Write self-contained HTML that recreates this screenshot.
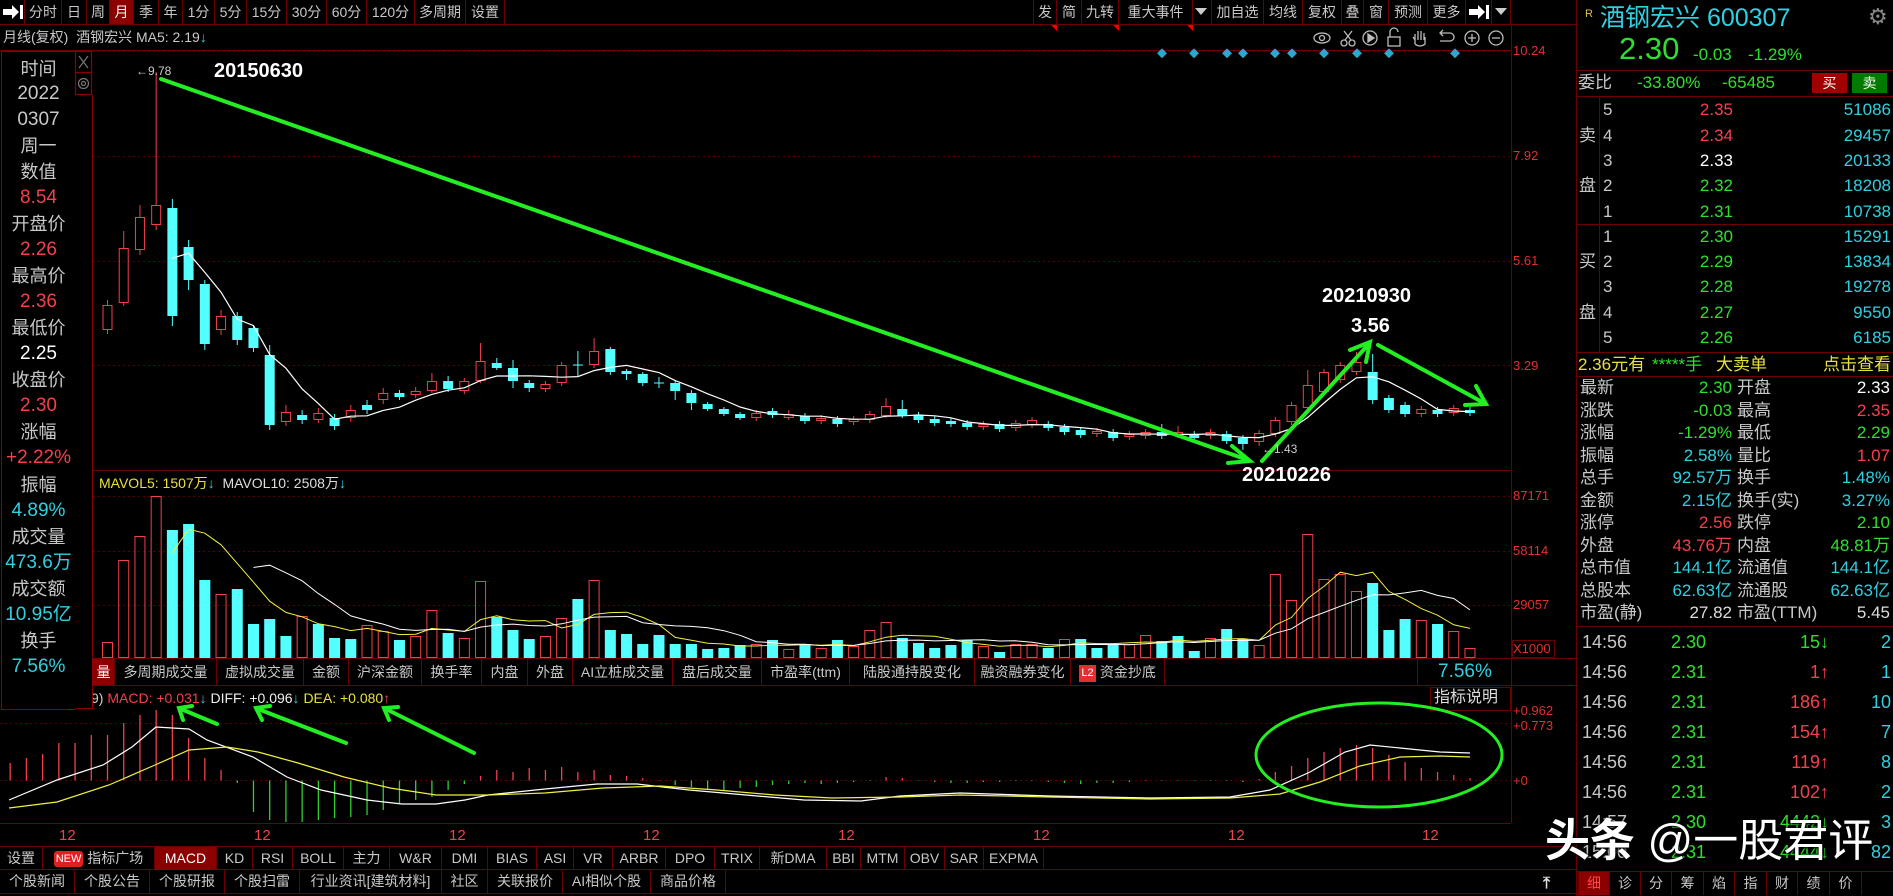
<!DOCTYPE html>
<html><head><meta charset="utf-8">
<style>
body{margin:0;background:#000;width:1893px;height:896px;overflow:hidden;position:relative;font-family:"Liberation Sans","Noto Sans CJK SC",sans-serif;color:#c8c8c8}
.t{position:absolute;white-space:nowrap;line-height:1}
.c{position:absolute;top:0;height:24px;line-height:24px;text-align:center;font-size:14px;border-right:1px solid #6a0000;box-sizing:border-box;color:#c8c8c8}
.lp{position:absolute;left:2px;width:73px;text-align:center;height:22px;line-height:22px;font-size:18px;color:#c8c8c8}
.r{color:#f5404c}.cy{color:#2fd0e0}.g{color:#2ee02e}.y{color:#e8e040}.w{color:#fff}
.rr{position:absolute;height:22px;line-height:22px;font-size:17px;white-space:nowrap}
.vt{position:absolute;top:659px;height:26px;line-height:26px;font-size:14px;text-align:center;border-right:1px solid #6a0000;box-sizing:border-box}
.bt{position:absolute;height:23px;line-height:23px;font-size:14px;text-align:center;border-right:1px solid #6a0000;box-sizing:border-box;color:#c8c8c8}
.ax{position:absolute;left:1513px;font-size:13px;color:#e03030;height:16px;line-height:16px}
</style></head><body>
<svg id="g" width="1893" height="896" style="position:absolute;left:0;top:0">
<g stroke="#6a0000" stroke-width="1" fill="none">
<line x1="0" y1="24.5" x2="1576" y2="24.5"/>
<line x1="0" y1="50.5" x2="1511" y2="50.5"/>
<line x1="1511.5" y1="24" x2="1511.5" y2="823"/>
<line x1="1576.5" y1="0" x2="1576.5" y2="896"/>
<line x1="93" y1="470.5" x2="1511" y2="470.5"/>
<line x1="93" y1="658.5" x2="1576" y2="658.5"/>
<line x1="93" y1="685.5" x2="1576" y2="685.5"/>
<line x1="0" y1="823.5" x2="1511" y2="823.5"/>
<line x1="0" y1="846.5" x2="1576" y2="846.5"/>
<line x1="0" y1="869.5" x2="1576" y2="869.5"/>
<line x1="0" y1="893.5" x2="1576" y2="893.5"/>
<line x1="1576" y1="70.5" x2="1893" y2="70.5"/>
<line x1="1576" y1="96.5" x2="1893" y2="96.5"/>
<line x1="1576" y1="224.5" x2="1893" y2="224.5"/>
<line x1="1576" y1="352.5" x2="1893" y2="352.5"/>
<line x1="1576" y1="376.5" x2="1893" y2="376.5"/>
<line x1="1576" y1="626.5" x2="1893" y2="626.5"/>
<line x1="1576" y1="871.5" x2="1893" y2="871.5"/>
<line x1="1599.5" y1="96" x2="1599.5" y2="352"/>
<line x1="1417.5" y1="658" x2="1417.5" y2="685"/>
<rect x="1512.5" y="640.5" width="42" height="17"/>
<rect x="1430.5" y="687.5" width="80" height="23"/>
</g>
<g stroke="#5a0000" stroke-dasharray="2,3" stroke-width="1">
<line x1="93" y1="51.5" x2="1511" y2="51.5"/>
<line x1="93" y1="156.5" x2="1511" y2="156.5"/>
<line x1="93" y1="261.5" x2="1511" y2="261.5"/>
<line x1="93" y1="365.5" x2="1511" y2="365.5"/>
<line x1="93" y1="496.5" x2="1511" y2="496.5"/>
<line x1="93" y1="551.5" x2="1511" y2="551.5"/>
<line x1="93" y1="605.5" x2="1511" y2="605.5"/>
<line x1="0" y1="723.5" x2="1511" y2="723.5"/>
<line x1="0" y1="780.5" x2="1511" y2="780.5"/>
</g>
<g id="dyn"></g>
<g id="ann" stroke="#22ee22" stroke-width="4" fill="none" stroke-linecap="round">
<line x1="161" y1="79" x2="1248" y2="460"/>
<polyline points="1232,446 1250,461 1228,463"/>
<line x1="1262" y1="461" x2="1368" y2="345"/>
<polyline points="1350,350 1370,342 1366,362"/>
<line x1="1378" y1="345" x2="1484" y2="403"/>
<polyline points="1465,405 1486,404 1476,386"/>
<line x1="217" y1="724" x2="181" y2="709"/>
<polyline points="183,720 179,708 192,706"/>
<line x1="346" y1="743" x2="258" y2="709"/>
<polyline points="262,720 256,708 270,706"/>
<line x1="474" y1="753" x2="386" y2="709"/>
<polyline points="389,720 384,708 398,707"/>
<ellipse cx="1379" cy="755" rx="123" ry="52" stroke-width="3"/>
</g>
<g fill="#2aa8d0">
<rect x="1158" y="50" width="7" height="7" transform="rotate(45 1162 54)"/>
<rect x="1190" y="50" width="7" height="7" transform="rotate(45 1194 54)"/>
<rect x="1223" y="50" width="7" height="7" transform="rotate(45 1227 54)"/>
<rect x="1239" y="50" width="7" height="7" transform="rotate(45 1243 54)"/>
<rect x="1271" y="50" width="7" height="7" transform="rotate(45 1275 54)"/>
<rect x="1288" y="50" width="7" height="7" transform="rotate(45 1292 54)"/>
<rect x="1320" y="50" width="7" height="7" transform="rotate(45 1324 54)"/>
<rect x="1353" y="50" width="7" height="7" transform="rotate(45 1357 54)"/>
<rect x="1385" y="50" width="7" height="7" transform="rotate(45 1389 54)"/>
<rect x="1451" y="50" width="7" height="7" transform="rotate(45 1455 54)"/>
</g>
<g stroke="#bbb" stroke-width="1.3" fill="none">
<ellipse cx="1322" cy="38" rx="8" ry="5"/><circle cx="1322" cy="38" r="2.5"/>
<circle cx="1344" cy="43" r="3"/><circle cx="1352" cy="43" r="3"/><line x1="1345" y1="40" x2="1352" y2="31"/><line x1="1351" y1="40" x2="1344" y2="31"/>
<circle cx="1370" cy="38" r="7"/><polygon points="1368,34 1374,38 1368,42" fill="#bbb"/>
<rect x="1388" y="37" width="12" height="9"/><path d="M1390 37 V32 a4 4 0 0 1 8 0"/>
<path d="M1415 44 V34 M1418 40 V31 M1421 40 V31 M1424 40 V33 M1424 38 V34 M1415 40 L1413 37 M1415 44 Q1420 48 1425 44 V37"/>
<path d="M1440 33 H1450 a4 4 0 0 1 0 8 H1440 M1443 30 L1440 33 L1443 36"/>
<circle cx="1472" cy="38" r="7"/><path d="M1468 38 H1476 M1472 34 V42"/>
<circle cx="1496" cy="38" r="7"/><path d="M1492 38 H1500"/>
</g>
<g fill="#fff">
<polygon points="3,9 12,9 12,5 19,12 12,19 12,15 3,15"/><rect x="20" y="5" width="3" height="14"/>
<polygon points="1469,9 1478,9 1478,5 1485,12 1478,19 1478,15 1469,15"/><rect x="1486" y="5" width="3" height="14"/>
<polygon points="1195,8 1207,8 1201,15" fill="#ccc"/>
<polygon points="1495,8 1507,8 1501,15" fill="#ccc"/>
</g>
<g fill="#e00">
<polygon points="1051,25 1057,25 1057,31"/><polygon points="1113,25 1119,25 1119,31"/><polygon points="1187,25 1193,25 1193,31"/>
</g>
</svg>

<div class="c" style="left:0;width:25px"></div>
<div class="c" style="left:25px;width:37px">分时</div>
<div class="c" style="left:62px;width:25px">日</div>
<div class="c" style="left:87px;width:23px">周</div>
<div class="c" style="left:110px;width:24px;background:#8b0000;color:#fff">月</div>
<div class="c" style="left:134px;width:25px">季</div>
<div class="c" style="left:159px;width:24px">年</div>
<div class="c" style="left:183px;width:32px">1分</div>
<div class="c" style="left:215px;width:32px">5分</div>
<div class="c" style="left:247px;width:40px">15分</div>
<div class="c" style="left:287px;width:40px">30分</div>
<div class="c" style="left:327px;width:40px">60分</div>
<div class="c" style="left:367px;width:48px">120分</div>
<div class="c" style="left:415px;width:51px">多周期</div>
<div class="c" style="left:466px;width:39px">设置</div>
<div class="c" style="left:1033px;width:24px;border-left:1px solid #6a0000">发</div>
<div class="c" style="left:1057px;width:25px">简</div>
<div class="c" style="left:1082px;width:37px">九转</div>
<div class="c" style="left:1119px;width:74px">重大事件</div>
<div class="c" style="left:1193px;width:19px"></div>
<div class="c" style="left:1212px;width:52px">加自选</div>
<div class="c" style="left:1264px;width:39px">均线</div>
<div class="c" style="left:1303px;width:39px">复权</div>
<div class="c" style="left:1342px;width:22px">叠</div>
<div class="c" style="left:1364px;width:25px">窗</div>
<div class="c" style="left:1389px;width:39px">预测</div>
<div class="c" style="left:1428px;width:38px">更多</div>
<div class="c" style="left:1466px;width:26px"></div>
<div class="c" style="left:1492px;width:19px"></div>

<div class="t" style="left:3px;top:30px;font-size:14px;color:#c8c8c8">月线(复权)&nbsp; 酒钢宏兴 MA5: 2.19<span class="cy">↓</span></div>

<div class="ax" style="top:43px">10.24</div>
<div class="ax" style="top:148px">7.92</div>
<div class="ax" style="top:253px">5.61</div>
<div class="ax" style="top:358px">3.29</div>
<div class="ax" style="top:488px">87171</div>
<div class="ax" style="top:543px">58114</div>
<div class="ax" style="top:597px">29057</div>
<div class="ax" style="top:641px">X1000</div>
<div class="ax" style="top:703px">+0.962</div>
<div class="ax" style="top:718px">+0.773</div>
<div class="ax" style="top:773px">+0</div>

<div class="t" style="left:214px;top:61px;font-size:20px;font-weight:bold;color:#fff">20150630</div>
<div class="t" style="left:160px;top:65px;font-size:12px;color:#ccc;transform:translateX(-24px)">←9.78</div>
<div class="t" style="left:1322px;top:286px;font-size:20px;font-weight:bold;color:#fff">20210930</div>
<div class="t" style="left:1351px;top:316px;font-size:20px;font-weight:bold;color:#fff">3.56</div>
<div class="t" style="left:1242px;top:465px;font-size:20px;font-weight:bold;color:#fff">20210226</div>
<div class="t" style="left:1262px;top:443px;font-size:12px;color:#ccc">←1.43</div>

<div class="t" style="left:99px;top:476px;font-size:14px" ><span class="y">MAVOL5: 1507万</span><span class="cy">↓</span>&nbsp; <span style="color:#ddd">MAVOL10: 2508万</span><span class="cy">↓</span></div>

<div class="vt" style="left:93px;width:22px;background:#8b0000;color:#fff">量</div>
<div class="vt" style="left:115px;width:102px">多周期成交量</div>
<div class="vt" style="left:217px;width:87px">虚拟成交量</div>
<div class="vt" style="left:304px;width:45px">金额</div>
<div class="vt" style="left:349px;width:73px">沪深金额</div>
<div class="vt" style="left:422px;width:60px">换手率</div>
<div class="vt" style="left:482px;width:46px">内盘</div>
<div class="vt" style="left:528px;width:45px">外盘</div>
<div class="vt" style="left:573px;width:100px">AI立桩成交量</div>
<div class="vt" style="left:673px;width:89px">盘后成交量</div>
<div class="vt" style="left:762px;width:88px">市盈率(ttm)</div>
<div class="vt" style="left:850px;width:125px">陆股通持股变化</div>
<div class="vt" style="left:975px;width:96px">融资融券变化</div>
<div class="vt" style="left:1071px;width:94px"><span style="display:inline-block;background:#e03030;color:#fff;font-size:11px;width:17px;height:17px;line-height:17px;vertical-align:middle">L2</span> 资金抄底</div>
<div class="t cy" style="left:1438px;top:662px;font-size:19px">7.56%</div>

<div class="t" style="left:91px;top:691px;font-size:14px;color:#ccc">9) <span class="r">MACD: +0.031</span><span class="cy">↓</span> <span style="color:#eee">DIFF: +0.096</span><span class="cy">↓</span> <span class="y">DEA: +0.080</span><span class="r">↑</span></div>
<div class="t" style="left:1434px;top:690px;font-size:16px;color:#ddd">指标说明</div>

<div class="t r" style="left:59px;top:828px;font-size:15px">12</div>
<div class="t r" style="left:254px;top:828px;font-size:15px">12</div>
<div class="t r" style="left:449px;top:828px;font-size:15px">12</div>
<div class="t r" style="left:643px;top:828px;font-size:15px">12</div>
<div class="t r" style="left:838px;top:828px;font-size:15px">12</div>
<div class="t r" style="left:1033px;top:828px;font-size:15px">12</div>
<div class="t r" style="left:1228px;top:828px;font-size:15px">12</div>
<div class="t r" style="left:1422px;top:828px;font-size:15px">12</div>

<div class="bt" style="left:0;top:847px;width:43px">设置</div>
<div class="bt" style="left:43px;top:847px;width:112px"><span style="display:inline-block;background:#e02020;color:#fff;font-size:11px;padding:0 2px;height:16px;line-height:16px;border-radius:3px;vertical-align:middle">NEW</span> 指标广场</div>
<div class="bt" style="left:155px;top:847px;width:62px;background:#8b0000;color:#fff">MACD</div>
<div class="bt" style="left:217px;top:847px;width:36px">KD</div>
<div class="bt" style="left:253px;top:847px;width:40px">RSI</div>
<div class="bt" style="left:293px;top:847px;width:51px">BOLL</div>
<div class="bt" style="left:344px;top:847px;width:46px">主力</div>
<div class="bt" style="left:390px;top:847px;width:52px">W&amp;R</div>
<div class="bt" style="left:442px;top:847px;width:46px">DMI</div>
<div class="bt" style="left:488px;top:847px;width:49px">BIAS</div>
<div class="bt" style="left:537px;top:847px;width:37px">ASI</div>
<div class="bt" style="left:574px;top:847px;width:39px">VR</div>
<div class="bt" style="left:613px;top:847px;width:53px">ARBR</div>
<div class="bt" style="left:666px;top:847px;width:49px">DPO</div>
<div class="bt" style="left:715px;top:847px;width:45px">TRIX</div>
<div class="bt" style="left:760px;top:847px;width:67px">新DMA</div>
<div class="bt" style="left:827px;top:847px;width:34px">BBI</div>
<div class="bt" style="left:861px;top:847px;width:44px">MTM</div>
<div class="bt" style="left:905px;top:847px;width:40px">OBV</div>
<div class="bt" style="left:945px;top:847px;width:39px">SAR</div>
<div class="bt" style="left:984px;top:847px;width:60px">EXPMA</div>
<div class="bt" style="left:0;top:870px;width:75px">个股新闻</div>
<div class="bt" style="left:75px;top:870px;width:75px">个股公告</div>
<div class="bt" style="left:150px;top:870px;width:75px">个股研报</div>
<div class="bt" style="left:225px;top:870px;width:75px">个股扫雷</div>
<div class="bt" style="left:300px;top:870px;width:142px">行业资讯[建筑材料]</div>
<div class="bt" style="left:442px;top:870px;width:46px">社区</div>
<div class="bt" style="left:488px;top:870px;width:75px">关联报价</div>
<div class="bt" style="left:563px;top:870px;width:88px">AI相似个股</div>
<div class="bt" style="left:651px;top:870px;width:75px">商品价格</div>

<div style="position:absolute;left:1px;top:51px;width:73px;height:657px;background:#000;border:1px solid #8b0000"></div>
<div style="position:absolute;left:75px;top:95px;width:17px;height:613px;background:#000;border-right:1px solid #8b0000;border-bottom:1px solid #8b0000"></div>
<div class="lp" style="top:58px">时间</div>
<div class="lp" style="top:83px;font-size:19px">2022</div>
<div class="lp" style="top:109px;font-size:19px">0307</div>
<div class="lp" style="top:135px">周一</div>
<div class="lp" style="top:161px">数值</div>
<div class="lp r" style="top:187px;font-size:19px">8.54</div>
<div class="lp" style="top:213px">开盘价</div>
<div class="lp r" style="top:239px;font-size:19px">2.26</div>
<div class="lp" style="top:265px">最高价</div>
<div class="lp r" style="top:291px;font-size:19px">2.36</div>
<div class="lp" style="top:317px">最低价</div>
<div class="lp w" style="top:343px;font-size:19px">2.25</div>
<div class="lp" style="top:369px">收盘价</div>
<div class="lp r" style="top:395px;font-size:19px">2.30</div>
<div class="lp" style="top:421px">涨幅</div>
<div class="lp r" style="top:447px;font-size:19px">+2.22%</div>
<div class="lp" style="top:474px">振幅</div>
<div class="lp cy" style="top:500px;font-size:19px">4.89%</div>
<div class="lp" style="top:526px">成交量</div>
<div class="lp cy" style="top:552px;font-size:19px">473.6万</div>
<div class="lp" style="top:578px">成交额</div>
<div class="lp cy" style="top:604px;font-size:19px">10.95亿</div>
<div class="lp" style="top:630px">换手</div>
<div class="lp cy" style="top:656px;font-size:19px">7.56%</div>
<svg width="20" height="46" style="position:absolute;left:74px;top:50px"><g stroke="#777" fill="none" stroke-width="1.2"><rect x="1.5" y="1.5" width="16" height="21" stroke="#8b0000"/><rect x="1.5" y="22.5" width="16" height="22" stroke="#8b0000"/><path d="M5 6 L14 18 M14 6 L5 18"/><circle cx="9.5" cy="33.5" r="5"/><circle cx="9.5" cy="33.5" r="2"/></g></svg>

<div class="t" style="left:1585px;top:9px;font-size:11px;color:#d8c040">R</div>
<div class="t cy" style="left:1600px;top:6px;font-size:25px">酒钢宏兴 600307</div>
<div class="t" style="left:1868px;top:6px;font-size:22px;color:#888">⚙</div>
<div class="t g" style="left:1619px;top:33px;font-size:31px">2.30</div>
<div class="t g" style="left:1693px;top:46px;font-size:17px">-0.03</div>
<div class="t g" style="left:1748px;top:46px;font-size:17px">-1.29%</div>
<div class="rr" style="left:1578px;top:72px;color:#c8c8c8">委比</div>
<div class="rr g" style="left:1637px;top:72px">-33.80%</div>
<div class="rr g" style="left:1722px;top:72px">-65485</div>
<div class="rr" style="left:1812px;top:73px;width:35px;height:20px;line-height:20px;background:#a00000;color:#fff;text-align:center;font-size:14px">买</div>
<div class="rr" style="left:1852px;top:73px;width:35px;height:20px;line-height:20px;background:#007a00;color:#fff;text-align:center;font-size:14px">卖</div>

<div class="rr" style="left:1579px;top:125px">卖</div>
<div class="rr" style="left:1579px;top:175px">盘</div>
<div class="rr" style="left:1579px;top:251px">买</div>
<div class="rr" style="left:1579px;top:302px">盘</div>

<div class="rr" style="left:1603px;top:99px">5</div><div class="rr r" style="right:160px;top:99px">2.35</div><div class="rr cy" style="right:2px;top:99px">51086</div>
<div class="rr" style="left:1603px;top:125px">4</div><div class="rr r" style="right:160px;top:125px">2.34</div><div class="rr cy" style="right:2px;top:125px">29457</div>
<div class="rr" style="left:1603px;top:150px">3</div><div class="rr w" style="right:160px;top:150px">2.33</div><div class="rr cy" style="right:2px;top:150px">20133</div>
<div class="rr" style="left:1603px;top:175px">2</div><div class="rr g" style="right:160px;top:175px">2.32</div><div class="rr cy" style="right:2px;top:175px">18208</div>
<div class="rr" style="left:1603px;top:201px">1</div><div class="rr g" style="right:160px;top:201px">2.31</div><div class="rr cy" style="right:2px;top:201px">10738</div>
<div class="rr" style="left:1603px;top:226px">1</div><div class="rr g" style="right:160px;top:226px">2.30</div><div class="rr cy" style="right:2px;top:226px">15291</div>
<div class="rr" style="left:1603px;top:251px">2</div><div class="rr g" style="right:160px;top:251px">2.29</div><div class="rr cy" style="right:2px;top:251px">13834</div>
<div class="rr" style="left:1603px;top:276px">3</div><div class="rr g" style="right:160px;top:276px">2.28</div><div class="rr cy" style="right:2px;top:276px">19278</div>
<div class="rr" style="left:1603px;top:302px">4</div><div class="rr g" style="right:160px;top:302px">2.27</div><div class="rr cy" style="right:2px;top:302px">9550</div>
<div class="rr" style="left:1603px;top:327px">5</div><div class="rr g" style="right:160px;top:327px">2.26</div><div class="rr cy" style="right:2px;top:327px">6185</div>

<div class="rr y" style="left:1578px;top:354px">2.36元有</div>
<div class="rr g" style="left:1652px;top:354px">*****手</div>
<div class="rr y" style="left:1716px;top:354px">大卖单</div>
<div class="rr y" style="right:2px;top:354px">点击查看</div>

<div class="rr" style="left:1580px;top:377px">最新</div><div class="rr g" style="right:161px;top:377px">2.30</div><div class="rr" style="left:1737px;top:377px">开盘</div><div class="rr w" style="right:3px;top:377px">2.33</div>
<div class="rr" style="left:1580px;top:400px">涨跌</div><div class="rr g" style="right:161px;top:400px">-0.03</div><div class="rr" style="left:1737px;top:400px">最高</div><div class="rr r" style="right:3px;top:400px">2.35</div>
<div class="rr" style="left:1580px;top:422px">涨幅</div><div class="rr g" style="right:161px;top:422px">-1.29%</div><div class="rr" style="left:1737px;top:422px">最低</div><div class="rr g" style="right:3px;top:422px">2.29</div>
<div class="rr" style="left:1580px;top:445px">振幅</div><div class="rr cy" style="right:161px;top:445px">2.58%</div><div class="rr" style="left:1737px;top:445px">量比</div><div class="rr r" style="right:3px;top:445px">1.07</div>
<div class="rr" style="left:1580px;top:467px">总手</div><div class="rr cy" style="right:161px;top:467px">92.57万</div><div class="rr" style="left:1737px;top:467px">换手</div><div class="rr cy" style="right:3px;top:467px">1.48%</div>
<div class="rr" style="left:1580px;top:490px">金额</div><div class="rr cy" style="right:161px;top:490px">2.15亿</div><div class="rr" style="left:1737px;top:490px">换手(实)</div><div class="rr cy" style="right:3px;top:490px">3.27%</div>
<div class="rr" style="left:1580px;top:512px">涨停</div><div class="rr r" style="right:161px;top:512px">2.56</div><div class="rr" style="left:1737px;top:512px">跌停</div><div class="rr g" style="right:3px;top:512px">2.10</div>
<div class="rr" style="left:1580px;top:535px">外盘</div><div class="rr r" style="right:161px;top:535px">43.76万</div><div class="rr" style="left:1737px;top:535px">内盘</div><div class="rr g" style="right:3px;top:535px">48.81万</div>
<div class="rr" style="left:1580px;top:557px">总市值</div><div class="rr cy" style="right:161px;top:557px">144.1亿</div><div class="rr" style="left:1737px;top:557px">流通值</div><div class="rr cy" style="right:3px;top:557px">144.1亿</div>
<div class="rr" style="left:1580px;top:580px">总股本</div><div class="rr cy" style="right:161px;top:580px">62.63亿</div><div class="rr" style="left:1737px;top:580px">流通股</div><div class="rr cy" style="right:3px;top:580px">62.63亿</div>
<div class="rr" style="left:1580px;top:602px">市盈(静)</div><div class="rr" style="right:161px;top:602px;color:#ddd">27.82</div><div class="rr" style="left:1737px;top:602px">市盈(TTM)</div><div class="rr" style="right:3px;top:602px;color:#ddd">5.45</div>

<div class="rr" style="left:1582px;top:631px;font-size:18px">14:56</div><div class="rr g" style="right:187px;top:631px;font-size:18px">2.30</div><div class="rr g" style="right:64px;top:631px;font-size:18px">15<b>↓</b></div><div class="rr cy" style="right:2px;top:631px;font-size:18px">2</div>
<div class="rr" style="left:1582px;top:661px;font-size:18px">14:56</div><div class="rr g" style="right:187px;top:661px;font-size:18px">2.31</div><div class="rr r" style="right:64px;top:661px;font-size:18px">1<b>↑</b></div><div class="rr cy" style="right:2px;top:661px;font-size:18px">1</div>
<div class="rr" style="left:1582px;top:691px;font-size:18px">14:56</div><div class="rr g" style="right:187px;top:691px;font-size:18px">2.31</div><div class="rr r" style="right:64px;top:691px;font-size:18px">186<b>↑</b></div><div class="rr cy" style="right:2px;top:691px;font-size:18px">10</div>
<div class="rr" style="left:1582px;top:721px;font-size:18px">14:56</div><div class="rr g" style="right:187px;top:721px;font-size:18px">2.31</div><div class="rr r" style="right:64px;top:721px;font-size:18px">154<b>↑</b></div><div class="rr cy" style="right:2px;top:721px;font-size:18px">7</div>
<div class="rr" style="left:1582px;top:751px;font-size:18px">14:56</div><div class="rr g" style="right:187px;top:751px;font-size:18px">2.31</div><div class="rr r" style="right:64px;top:751px;font-size:18px">119<b>↑</b></div><div class="rr cy" style="right:2px;top:751px;font-size:18px">8</div>
<div class="rr" style="left:1582px;top:781px;font-size:18px">14:56</div><div class="rr g" style="right:187px;top:781px;font-size:18px">2.31</div><div class="rr r" style="right:64px;top:781px;font-size:18px">102<b>↑</b></div><div class="rr cy" style="right:2px;top:781px;font-size:18px">2</div>
<div class="rr" style="left:1582px;top:811px;font-size:18px">14:57</div><div class="rr g" style="right:187px;top:811px;font-size:18px">2.30</div><div class="rr g" style="right:64px;top:811px;font-size:18px">4442<b>↓</b></div><div class="rr cy" style="right:2px;top:811px;font-size:18px">3</div>
<div class="rr" style="left:1582px;top:841px;font-size:18px">15:00</div><div class="rr g" style="right:187px;top:841px;font-size:18px">2.31</div><div class="rr g" style="right:64px;top:841px;font-size:18px">4444<b>↓</b></div><div class="rr cy" style="right:2px;top:841px;font-size:18px">82</div>

<div class="bt" style="left:1578px;top:872px;width:32px;background:#8b0000;color:#f44;border-left:1px solid #6a0000">细</div>
<div class="bt" style="left:1610px;top:872px;width:31px">诊</div>
<div class="bt" style="left:1641px;top:872px;width:31px">分</div>
<div class="bt" style="left:1672px;top:872px;width:32px">筹</div>
<div class="bt" style="left:1704px;top:872px;width:31px">焰</div>
<div class="bt" style="left:1735px;top:872px;width:32px">指</div>
<div class="bt" style="left:1767px;top:872px;width:31px">财</div>
<div class="bt" style="left:1798px;top:872px;width:32px">绩</div>
<div class="bt" style="left:1830px;top:872px;width:32px">价</div>
<div class="t" style="left:1543px;top:876px;font-size:16px;color:#ddd;font-weight:bold">⤒</div>

<div class="t" style="left:1545px;top:818px;font-size:45px;color:#fff;text-shadow:0 0 3px #000,1px 1px 2px #000"><b>头条</b> @一股君评</div>

<script>
(function(){
const s=document.getElementById('dyn');
const NS='http://www.w3.org/2000/svg';
function el(t,a){const e=document.createElementNS(NS,t);for(const k in a)e.setAttribute(k,a[k]);s.appendChild(e);return e;}
const X=i=>107.5+16.22*i;
const RED='#f0404a',CY='#54ffff';
const C=[[330,305,300,334],[303,248,231,306],[250,217,205,255],[225,205,72,230],[208,316,199,326],[247,280,240,290],[284,344,280,350],[330,316,310,335],[316,340,312,345],[328,348,325,352],[355,425,345,430],[422,412,405,426],[415,420,410,424],[420,413,408,423],[418,426,414,430],[418,410,405,422],[405,410,400,414],[400,393,388,404],[393,397,390,400],[395,391,387,398],[391,381,373,393],[381,389,376,392],[391,381,378,394],[381,361,343,383],[363,368,358,370],[368,381,360,388],[383,388,380,392],[389,384,381,392],[383,365,362,386],[365,365,351,376],[365,351,338,368],[349,372,347,375],[371,374,369,380],[374,383,372,386],[383,383,377,388],[383,391,381,400],[393,403,390,410],[404,409,402,411],[409,414,407,416],[414,418,412,420],[418,413,410,421],[411,415,408,418],
[418,414,410,420],[416,421],[421,418],[419,424],[422,419],[420,414],[416,406,398,418],[409,416,400,418],[415,420],[419,423],[421,424],[423,427],[427,424],[424,429],[428,423],[425,420],[424,428],[427,432],[430,435],[434,431],[432,438],[437,434],[436,432],[432,436,424,439],[435,432,426,438],[434,438],[436,432],[434,441],[438,444,435,450],[442,433,430,446],[434,420],[422,405],[408,385,370,410],[392,372],[380,365],[372,362,352,375],[372,400,354,404],[398,410],[405,414],[414,409],[410,414],[413,408],[410,413]];
C.forEach((d,i)=>{const x=X(i);let [o,c,h,l]=d;const top=Math.min(o,c),bot=Math.max(o,c);if(h===undefined)h=top-3;if(l===undefined)l=bot+3;const up=c<o;
 if(top===bot){el('line',{x1:x,x2:x,y1:h,y2:l,stroke:up?RED:CY});el('line',{x1:x-5,x2:x+5,y1:top,y2:top,stroke:CY});return;}
 if(up){el('line',{x1:x,x2:x,y1:h,y2:top,stroke:RED});el('line',{x1:x,x2:x,y1:bot,y2:l,stroke:RED});el('rect',{x:x-4.5,y:top+0.5,width:9,height:bot-top-1,fill:'none',stroke:RED});}
 else{el('line',{x1:x,x2:x,y1:h,y2:l,stroke:CY});el('rect',{x:x-5,y:top,width:10,height:Math.max(bot-top,1),fill:CY});}
});
let p=[];for(let i=4;i<C.length;i++){let m=0;for(let k=0;k<5;k++)m+=C[i-k][1];p.push(X(i)+','+(m/5));}
el('polyline',{points:p.join(' '),fill:'none',stroke:'#fff','stroke-width':1.2});
const V=[[642,'r'],[560,'r'],[536,'r'],[496,'r'],[530,'c'],[524,'c'],[580,'c'],[594,'r'],[589,'c'],[624,'c'],[619,'c'],[636,'c'],[616,'r'],[624,'c'],[638,'c'],[639,'c'],[625,'r'],[631,'r'],[640,'c'],[636,'r'],[610,'r'],[633,'c'],[638,'r'],[581,'r'],[617,'c'],[630,'c'],[639,'c'],[636,'r'],[618,'r'],[599,'c'],[580,'r'],[630,'c'],[634,'c'],[644,'c'],[635,'c'],[644,'c'],[644,'c'],[649,'c'],[648,'c'],[645,'c'],[644,'r'],[640,'c'],[649,'r'],[645,'c'],[648,'r'],[640,'c'],[646,'r'],[630,'r'],[622,'r'],[638,'c'],[643,'c'],[648,'c'],[645,'c'],[640,'c'],[646,'r'],[652,'c'],[644,'r'],[644,'r'],[648,'c'],[639,'r'],[639,'c'],[648,'c'],[644,'c'],[644,'r'],[635,'r'],[641,'c'],[636,'c'],[651,'c'],[638,'r'],[629,'c'],[639,'c'],[645,'r'],[574,'r'],[600,'r'],[534,'r'],[579,'r'],[574,'r'],[591,'r'],[583,'c'],[630,'c'],[619,'c'],[620,'r'],[624,'c'],[631,'r'],[648,'r']];
const B=658;
V.forEach((d,i)=>{const x=X(i);if(d[1]=='r')el('rect',{x:x-5,y:d[0]+0.5,width:10,height:B-d[0]-1,fill:'none',stroke:RED});else el('rect',{x:x-5.5,y:d[0],width:11,height:B-d[0],fill:CY});});
function ma(n,col){let q=[];for(let i=n-1;i<V.length;i++){let m=0;for(let k=0;k<n;k++)m+=B-V[i-k][0];q.push(X(i)+','+(B-m/n));}el('polyline',{points:q.join(' '),fill:'none',stroke:col,'stroke-width':1});}
ma(5,'#f0f040');ma(10,'#fff');
const H=[763,758,754,743,743,735,735,723,715,710,715,738,758,770,783,812,820,822,822,820,818,817,815,810,803,800,797,790,784,776,770,772,768,770,767,772,770,775,776,778,780,785,787,790,790,788,787,785,784,783,784,783,782,780,777,778,780,782,783,783,782,782,781,780,782,783,784,783,783,782,781,780,780,781,780,781,782,779,772,766,758,752,748,745,748,755,762,768,772,775,778];
H.forEach((y,j)=>{const x=X(j-6);el('line',{x1:x,x2:x,y1:780.5,y2:y,stroke:y<780?RED:'#30d030','stroke-width':1.3});});
el('polyline',{points:'9,800 57,780 103,765 132,747 156,727 189,729 207,740 253,757 287,777 321,790 367,800 402,804 436,804 465,800 488,795 545,789 597,784 637,784 689,790 746,795 804,800 861,801 900,796 960,793 1050,796 1150,798 1230,797 1270,790 1310,772 1345,752 1370,745 1400,748 1440,752 1470,753',fill:'none',stroke:'#fff','stroke-width':1.2});
el('polyline',{points:'9,808 57,802 109,785 155,765 189,750 227,747 258,752 298,763 344,777 390,788 436,795 488,795 545,793 603,788 660,786 717,790 775,795 832,798 900,797 960,795 1050,797 1150,799 1230,798 1280,794 1320,782 1360,766 1400,757 1440,756 1470,757',fill:'none',stroke:'#f0f040','stroke-width':1.2});
const a=document.getElementById('ann');a.parentNode.appendChild(a);
})();
</script>
</body></html>
